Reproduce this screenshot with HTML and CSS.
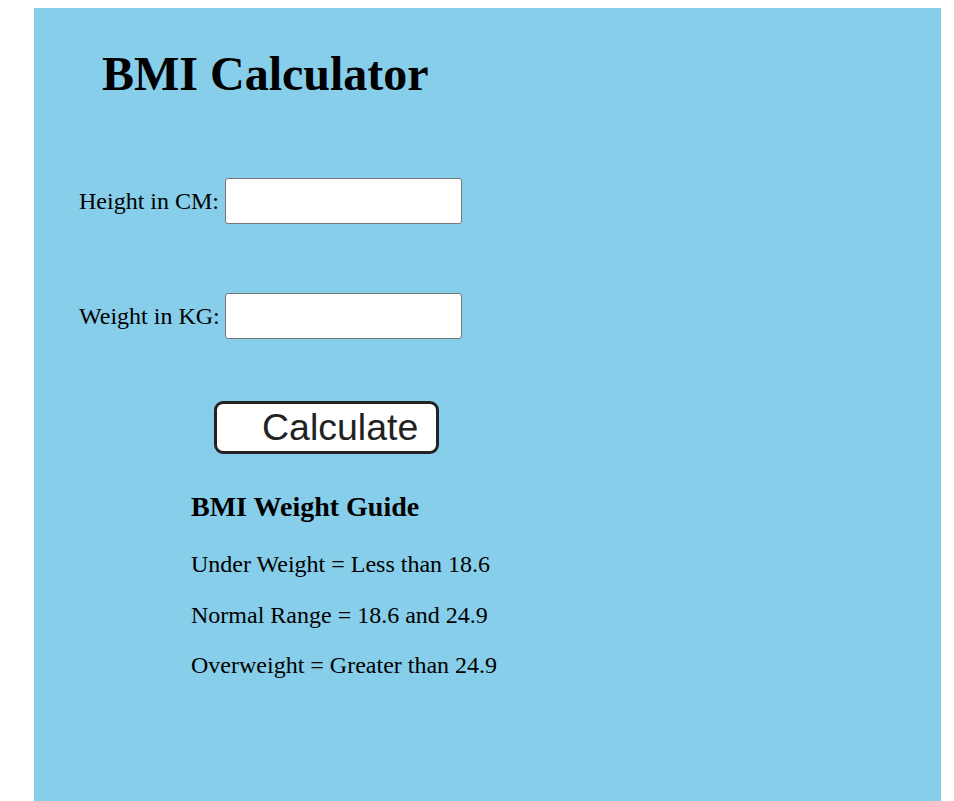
FILE: index.html
```html
<!DOCTYPE html>
<html lang="en">
<head>
<meta charset="utf-8">
<title>BMI Calculator</title>
<link rel="stylesheet" href="styles.css">
</head>
<body>
<div class="app">
  <h1 class="title">BMI Calculator</h1>
  <form class="form" onsubmit="return false">
    <div class="row">
      <label class="label" for="height">Height in CM:</label>
      <input class="field" id="height" type="text">
    </div>
    <div class="row">
      <label class="label" for="weight">Weight in KG:</label>
      <input class="field" id="weight" type="text">
    </div>
    <button class="calc" type="button">Calculate</button>
  </form>
  <div class="guide">
    <h2 class="guide-title">BMI Weight Guide</h2>
    <p class="guide-item">Under Weight = Less than 18.6</p>
    <p class="guide-item">Normal Range = 18.6 and 24.9</p>
    <p class="guide-item">Overweight = Greater than 24.9</p>
  </div>
</div>
</body>
</html>
```
FILE: styles.css
```css
html, body {
  margin: 0;
  padding: 0;
  background: #ffffff;
}
body {
  padding: 8px 0 0 0;
  font-family: "Liberation Serif", "Times New Roman", serif;
  color: #000;
}
.app {
  box-sizing: border-box;
  margin-left: 34px;
  width: 907px;
  height: 793px;
  background: #87ceeb;
  padding-top: 38px;
  overflow: hidden;
}
.title {
  margin: 0 0 0 68px;
  font-size: 48px;
  line-height: 56px;
  font-weight: bold;
}
.form {
  margin-top: 76px;
  display: flex;
  flex-direction: column;
  align-items: flex-start;
}
.row {
  display: grid;
  grid-template-columns: 146px 237px;
  align-items: center;
  margin-left: 45px;
  margin-bottom: 69px;
}
.row:nth-child(2) {
  margin-bottom: 62px;
}
.label {
  font-size: 24px;
  line-height: 28px;
  white-space: nowrap;
}
.field {
  box-sizing: border-box;
  width: 237px;
  height: 46px;
  border: 1px solid #767676;
  border-radius: 3px;
  background: #fff;
  margin: 0;
  padding: 0 6px;
  font-size: 20px;
}
.calc {
  box-sizing: border-box;
  margin-left: 180px;
  width: 225px;
  height: 53px;
  border: 3px solid #222;
  border-radius: 9px;
  background: #fff;
  padding: 0 0 0 45px;
  text-align: left;
  font-family: "Liberation Sans", Arial, sans-serif;
  font-size: 37.5px;
  color: #222;
  cursor: pointer;
}
.guide {
  margin: 37px 0 0 157px;
}
.guide-title {
  margin: 0 0 27px;
  font-size: 28px;
  line-height: 32px;
  font-weight: bold;
}
.guide-item {
  margin: 0 0 22px;
  font-size: 24px;
  line-height: 28.5px;
}
```
